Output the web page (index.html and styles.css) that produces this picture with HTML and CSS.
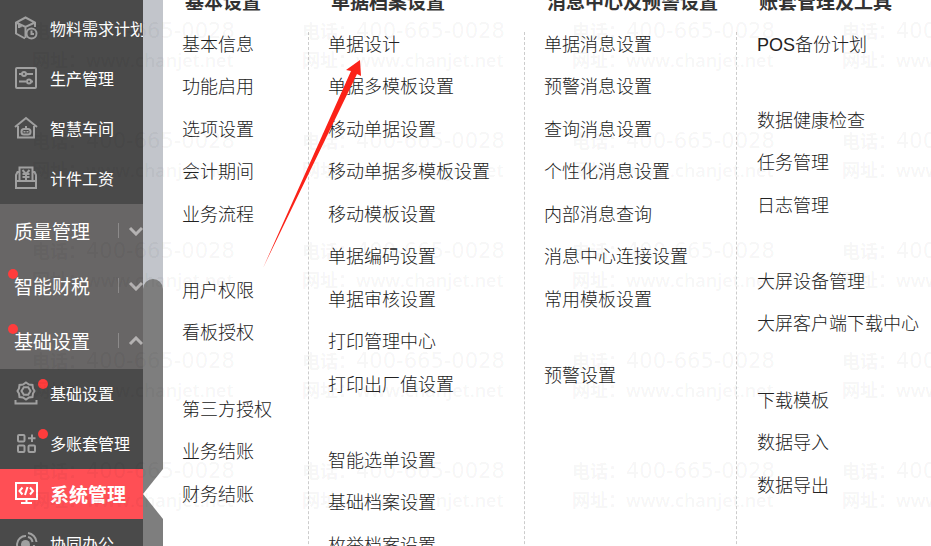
FILE: index.html
```html
<!DOCTYPE html>
<html lang="zh-CN">
<head>
	<meta charset="UTF-8">
	<title>系统管理</title>
	<link rel="stylesheet" href="styles.css">
</head>
<body>
	<div class="page">
		<!-- 左侧导航 -->
		<nav class="sidebar">
			<ul class="sub">
				<li>
					<a href="#">
						<svg class="icon" viewBox="0 0 24 24"><path d="M21 11V6.500L11.500 1.500L2 6.500V17.500L11 22.500M2 6.500L11.500 11L21 6.500M11.500 11V22M5 12V9.500L7.500 11"/><circle cx="17.500" cy="17.500" r="5"/><path d="M17.500 14.500V18H20"/></svg>
						<span>物料需求计划</span>
					</a>
				</li>
				<li>
					<a href="#">
						<svg class="icon" viewBox="0 0 24 24"><rect x="2" y="2" width="20" height="20" rx="1"/><path d="M5 8H8M12 8H19M5 15.500H12M17 15.500H19"/><circle cx="10" cy="8" r="2"/><circle cx="15" cy="15.500" r="2"/></svg>
						<span>生产管理</span>
					</a>
				</li>
				<li>
					<a href="#">
						<svg class="icon" viewBox="0 0 24 24"><path d="M1 11L12 2L23 11M4 10V21.500H20V10"/><rect x="7.500" y="13" width="9" height="5.500" rx="2.500"/><path d="M12 10V13M10.500 15V16.500M13.500 15V16.500"/></svg>
						<span>智慧车间</span>
					</a>
				</li>
				<li>
					<a href="#">
						<svg class="icon" viewBox="0 0 24 24"><path d="M5 6H3.500L2 9V22H22V9L20.500 6H19M2 15H22M5.500 15V1.500H18.500V15M8.500 4L12 8L15.500 4M8.500 8H15.500M8.500 11H15.500M12 8V14"/></svg>
						<span>计件工资</span>
					</a>
				</li>
			</ul>
			<button class="group" type="button">
				<span>质量管理</span><i class="line"></i>
				<svg class="chevron" viewBox="0 0 16 10"><path d="M2 2L8 8L14 2"/></svg>
			</button>
			<button class="group" type="button">
				<b class="dot"></b>
				<span>智能财税</span><i class="line"></i>
				<svg class="chevron" viewBox="0 0 16 10"><path d="M2 2L8 8L14 2"/></svg>
			</button>
			<button class="group" type="button">
				<b class="dot"></b>
				<span>基础设置</span><i class="line"></i>
				<svg class="chevron" viewBox="0 0 16 10"><path d="M2 8L8 2L14 8"/></svg>
			</button>
			<ul class="sub">
				<li>
					<a href="#">
						<svg class="icon" viewBox="0 0 24 24"><path d="M12 1.500L15 3.500L18.500 4L19 7.500L20.500 10L19 12.500L18.500 16L15 16.500L12 18.500L9 16.500L5.500 16L5 12.500L3.500 10L5 7.500L5.500 4L9 3.500Z"/><path d="M9.800 6.200H14.200L16.500 10L14.200 13.800H9.800L7.500 10Z"/><path d="M1.500 19V22.500H22.500V19"/></svg>
						<span>基础设置</span>
						<b class="dot"></b>
					</a>
				</li>
				<li>
					<a href="#">
						<svg class="icon" viewBox="0 0 24 24"><rect x="4" y="4" width="6.500" height="6.500" rx="1"/><rect x="4" y="14.500" width="6.500" height="6.500" rx="1"/><rect x="14.500" y="14.500" width="6.500" height="6.500" rx="1"/><path d="M18 3.500V11M14 7.200H21.500"/></svg>
						<span>多账套管理</span>
						<b class="dot"></b>
					</a>
				</li>
				<li class="active">
					<a href="#">
						<svg class="icon" viewBox="0 0 24 24"><rect x="2" y="2" width="21" height="16"/><path d="M8.500 6.500L5.500 10L8.500 13.500M16 6.500L19 10L16 13.500M13.500 6L11 14M12.500 18V22M7 22H18"/></svg>
						<span>系统管理</span>
					</a>
				</li>
				<li>
					<a href="#">
						<svg class="icon" viewBox="0 0 24 24"><path d="M12 5A8.500 8.500 0 1 0 20 14M14 2A10 10 0 0 1 22.500 11M14 6A6 6 0 0 1 18.500 11"/><circle class="fill" cx="11.500" cy="13.500" r="4.500"/></svg>
						<span>协同办公</span>
					</a>
				</li>
			</ul>
		</nav>
		<div class="scroll"><div class="thumb"></div></div>

		<!-- 右侧菜单 -->
		<main class="menu">
			<section>
				<h2>基本设置</h2>
				<div class="lists">
					<ul>
						<li><a href="#">基本信息</a></li>
						<li><a href="#">功能启用</a></li>
						<li><a href="#">选项设置</a></li>
						<li><a href="#">会计期间</a></li>
						<li><a href="#">业务流程</a></li>
					</ul>
					<ul>
						<li><a href="#">用户权限</a></li>
						<li><a href="#">看板授权</a></li>
					</ul>
					<ul>
						<li><a href="#">第三方授权</a></li>
						<li><a href="#">业务结账</a></li>
						<li><a href="#">财务结账</a></li>
					</ul>
				</div>
			</section>
			<section>
				<h2>单据档案设置</h2>
				<div class="lists">
					<ul>
						<li><a href="#">单据设计</a></li>
						<li><a href="#">单据多模板设置</a></li>
						<li><a href="#">移动单据设置</a></li>
						<li><a href="#">移动单据多模板设置</a></li>
						<li><a href="#">移动模板设置</a></li>
						<li><a href="#">单据编码设置</a></li>
						<li><a href="#">单据审核设置</a></li>
						<li><a href="#">打印管理中心</a></li>
						<li><a href="#">打印出厂值设置</a></li>
					</ul>
					<ul>
						<li><a href="#">智能选单设置</a></li>
						<li><a href="#">基础档案设置</a></li>
						<li><a href="#">枚举档案设置</a></li>
					</ul>
				</div>
			</section>
			<section>
				<h2>消息中心及预警设置</h2>
				<div class="lists">
					<ul>
						<li><a href="#">单据消息设置</a></li>
						<li><a href="#">预警消息设置</a></li>
						<li><a href="#">查询消息设置</a></li>
						<li><a href="#">个性化消息设置</a></li>
						<li><a href="#">内部消息查询</a></li>
						<li><a href="#">消息中心连接设置</a></li>
						<li><a href="#">常用模板设置</a></li>
					</ul>
					<ul>
						<li><a href="#">预警设置</a></li>
					</ul>
				</div>
			</section>
			<section>
				<h2>账套管理及工具</h2>
				<div class="lists">
					<ul>
						<li><a href="#">POS备份计划</a></li>
					</ul>
					<ul>
						<li><a href="#">数据健康检查</a></li>
						<li><a href="#">任务管理</a></li>
						<li><a href="#">日志管理</a></li>
					</ul>
					<ul>
						<li><a href="#">大屏设备管理</a></li>
						<li><a href="#">大屏客户端下载中心</a></li>
					</ul>
					<ul>
						<li><a href="#">下载模板</a></li>
						<li><a href="#">数据导入</a></li>
						<li><a href="#">数据导出</a></li>
					</ul>
				</div>
			</section>
		</main>

		<!-- 水印 -->
		<div class="watermark" aria-hidden="true">
			<p>电话：<span class="tel">400-665-0028</span><br>网址：<span>www.chanjet.net</span></p>
			<p>电话：<span class="tel">400-665-0028</span><br>网址：<span>www.chanjet.net</span></p>
			<p>电话：<span class="tel">400-665-0028</span><br>网址：<span>www.chanjet.net</span></p>
			<p>电话：<span class="tel">400-665-0028</span><br>网址：<span>www.chanjet.net</span></p>
			<p>电话：<span class="tel">400-665-0028</span><br>网址：<span>www.chanjet.net</span></p>
			<p>电话：<span class="tel">400-665-0028</span><br>网址：<span>www.chanjet.net</span></p>
			<p>电话：<span class="tel">400-665-0028</span><br>网址：<span>www.chanjet.net</span></p>
			<p>电话：<span class="tel">400-665-0028</span><br>网址：<span>www.chanjet.net</span></p>
			<p>电话：<span class="tel">400-665-0028</span><br>网址：<span>www.chanjet.net</span></p>
			<p>电话：<span class="tel">400-665-0028</span><br>网址：<span>www.chanjet.net</span></p>
			<p>电话：<span class="tel">400-665-0028</span><br>网址：<span>www.chanjet.net</span></p>
			<p>电话：<span class="tel">400-665-0028</span><br>网址：<span>www.chanjet.net</span></p>
			<p>电话：<span class="tel">400-665-0028</span><br>网址：<span>www.chanjet.net</span></p>
			<p>电话：<span class="tel">400-665-0028</span><br>网址：<span>www.chanjet.net</span></p>
			<p>电话：<span class="tel">400-665-0028</span><br>网址：<span>www.chanjet.net</span></p>
			<p>电话：<span class="tel">400-665-0028</span><br>网址：<span>www.chanjet.net</span></p>
			<p>电话：<span class="tel">400-665-0028</span><br>网址：<span>www.chanjet.net</span></p>
			<p>电话：<span class="tel">400-665-0028</span><br>网址：<span>www.chanjet.net</span></p>
			<p>电话：<span class="tel">400-665-0028</span><br>网址：<span>www.chanjet.net</span></p>
			<p>电话：<span class="tel">400-665-0028</span><br>网址：<span>www.chanjet.net</span></p>
		</div>

		<!-- 红色箭头，指向单据设计 -->
		<svg class="arrow" viewBox="0 0 98 208"><path d="M97 0L83 10L88 11L0 208L94 14L98 16Z"/></svg>
	</div>
</body>
</html>
```

FILE: styles.css
```css
*{margin: 0;padding: 0;box-sizing: border-box;}
body{
	font-family: "Liberation Sans", "Noto Sans CJK SC", sans-serif;
	background: #fff;
	color: #333;
}
ul{
	list-style: none;
}
a{
	color: inherit;
	text-decoration: none;
}
.page{
	position: relative;
	display: flex;
	height: 100vh;
	overflow: hidden;
}

/*左侧导航*/
.sidebar{
	flex: none;
	width: 143px;
	padding-top: 4px;
	background: #4a4a4a;
	color: #fff;
}
.sub li{
	position: relative;
}
.sub a{
	position: relative;
	display: flex;
	align-items: center;
	gap: 12px;
	height: 50px;
	padding: 0 0 2px 14px;
	overflow: hidden;
	font-size: 16px;
	white-space: nowrap;
}
.icon{
	flex: none;
	width: 24px;
	height: 24px;
	fill: none;
	stroke: #a0a0a0;
	stroke-width: 2;
}
.icon .fill{
	fill: #a0a0a0;
	stroke: none;
}
.sub .active a{
	background: #ff4f55;
	font-size: 19px;
	font-weight: bold;
}
.active .icon{
	stroke: #fff;
}
.active::after{
	content: "";
	position: absolute;
	top: 0;
	left: 100%;
	z-index: 1;
	border: solid transparent;
	border-width: 25px 20px 25px 0;
	border-right-color: #fff;
}
.group{
	position: relative;
	display: flex;
	align-items: center;
	width: 100%;
	height: 55px;
	padding: 0 0 2px 14px;
	overflow: hidden;
	border: 0;
	background: #686666;
	color: #fff;
	font-family: inherit;
	font-size: 19px;
	white-space: nowrap;
	cursor: pointer;
}
.line{
	flex: none;
	width: 1px;
	height: 15px;
	margin: 0 9px 0 28px;
	background: #8c8a8a;
}
.chevron{
	flex: none;
	width: 16px;
	height: 10px;
	fill: none;
	stroke: #b4b2b2;
	stroke-width: 3;
}
.dot{
	position: absolute;
	top: 10px;
	left: 8px;
	width: 10px;
	height: 10px;
	border-radius: 50%;
	background: #ff3c3c;
}
.sub .dot{
	left: 38px;
}

/*滚动条*/
.scroll{
	display: flex;
	flex: none;
	width: 20px;
	padding-top: 279px;
	background: #c2c5cb;
}
.thumb{
	flex: 1;
	border-radius: 10px 10px 0 0;
	background: #7e7e7e;
}

/*右侧菜单*/
.menu{
	flex: 1;
	display: grid;
	grid-template-columns: 146fr 216fr 212fr 194fr;
	margin-top: -9px;
}
.menu section{
	display: flex;
	flex-direction: column;
	min-width: 0;
	white-space: nowrap;
}
.menu h2{
	height: 24px;
	margin-bottom: 17px;
	padding-left: 22px;
	font-size: 19px;
	line-height: 24px;
}
.lists{
	flex: 1;
	padding-left: 19px;
	border-right: 1px dashed #ccc;
}
.menu section:last-child .lists{
	padding-left: 20px;
	border-right: 0;
}
.lists ul{
	display: flow-root;
	margin-bottom: 34px;
}
.lists li{
	height: 26px;
	margin-bottom: 16px;
	color: #222;
	font-size: 18px;
	font-weight: 300;
	line-height: 26px;
}
.lists li:nth-child(even){
	margin-bottom: 17px;
}

/*水印*/
.watermark{
	position: absolute;
	top: 17px;
	left: 32px;
	z-index: 2;
	display: grid;
	grid-template-columns: repeat(4, 270px);
	grid-auto-rows: 110px;
	color: rgba(0,0,0,.05);
	font-family: "Open Sans", "Noto Sans CJK SC", sans-serif;
	font-size: 18px;
	font-weight: 600;
	line-height: 29px;
	white-space: nowrap;
	pointer-events: none;
}
.tel{
	font-family: "DejaVu Sans", sans-serif;
	font-size: 21px;
	font-weight: normal;
}

/*箭头*/
.arrow{
	position: absolute;
	top: 60px;
	left: 263px;
	z-index: 3;
	width: 98px;
	height: 208px;
	fill: #fb2218;
	pointer-events: none;
}
```
